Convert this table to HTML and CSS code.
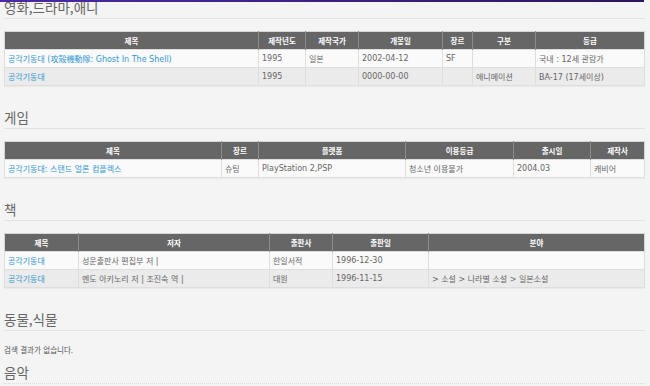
FILE: index.html
```html
<!DOCTYPE html>
<html lang="ko">
<head>
<meta charset="utf-8">
<title>검색 결과</title>
<link rel="stylesheet" href="styles.css">
</head>
<body>
<div class="topbar"></div>
<main class="page">
  <section class="section">
    <h2 class="heading">영화,드라마,애니</h2>
    <table class="grid grid-movie">
      <thead>
        <tr><th>제목</th><th>제작년도</th><th>제작국가</th><th>개봉일</th><th>장르</th><th>구분</th><th>등급</th></tr>
      </thead>
      <tbody>
        <tr><td><a class="link" href="#">공각기동대 (攻殼機動隊: Ghost In The Shell)</a></td><td>1995</td><td>일본</td><td>2002-04-12</td><td>SF</td><td></td><td>국내 : 12세 관람가</td></tr>
        <tr class="alt"><td><a class="link" href="#">공각기동대</a></td><td>1995</td><td></td><td>0000-00-00</td><td></td><td>애니메이션</td><td>BA-17 (17세이상)</td></tr>
      </tbody>
    </table>
  </section>

  <section class="section">
    <h2 class="heading">게임</h2>
    <table class="grid grid-game">
      <thead>
        <tr><th>제목</th><th>장르</th><th>플랫폼</th><th>이용등급</th><th>출시일</th><th>제작사</th></tr>
      </thead>
      <tbody>
        <tr><td><a class="link" href="#">공각기동대: 스탠드 얼론 컴플렉스</a></td><td>슈팅</td><td>PlayStation 2,PSP</td><td>청소년 이용불가</td><td>2004.03</td><td>캐비어</td></tr>
      </tbody>
    </table>
  </section>

  <section class="section">
    <h2 class="heading">책</h2>
    <table class="grid grid-book">
      <thead>
        <tr><th>제목</th><th>저자</th><th>출판사</th><th>출판일</th><th>분야</th></tr>
      </thead>
      <tbody>
        <tr><td><a class="link" href="#">공각기동대</a></td><td>성운출판사 편집부 저 |</td><td>한일서적</td><td>1996-12-30</td><td></td></tr>
        <tr class="alt"><td><a class="link" href="#">공각기동대</a></td><td>멘도 아키노리 저 | 조진숙 역 |</td><td>대원</td><td>1996-11-15</td><td>&gt; 소설 &gt; 나라별 소설 &gt; 일본소설</td></tr>
      </tbody>
    </table>
  </section>

  <section class="section">
    <h2 class="heading">동물,식물</h2>
    <p class="empty">검색 결과가 없습니다.</p>
  </section>

  <section class="section section-after-empty">
    <h2 class="heading heading-dotted">음악</h2>
  </section>
</main>
</body>
</html>
```

FILE: styles.css
```css
html, body {
  margin: 0;
  padding: 0;
  background: #f4f4f4;
}

body {
  font-family: "DejaVu Sans", "Noto Sans CJK KR", sans-serif;
  color: #666;
  overflow: hidden;
}

.topbar {
  position: fixed;
  top: 0;
  left: 0;
  width: 644px;
  height: 2px;
  background: linear-gradient(90deg, #4b2aa3, #2a1660);
  z-index: 5;
}

.page {
  width: 641px;
  padding: 0 5px 0 4px;
}

.section {
  margin-top: 22px;
}

.section:first-child {
  margin-top: -2px;
}

.section-after-empty {
  margin-top: 6px;
}

.heading {
  margin: 0;
  font-family: "Noto Sans CJK KR", sans-serif;
  font-weight: 400;
  font-size: 13.5px;
  line-height: 18px;
  color: #666;
  padding-bottom: 2px;
  border-bottom: 1px solid #e2e2e2;
}

.heading-dotted {
  border-bottom: 1px dotted #d8d8d8;
}

.grid {
  margin-top: 12px;
  width: 641px;
  table-layout: fixed;
  border-collapse: collapse;
  border: 1px solid #d6d6d6;
  font-size: 8px;
  box-shadow: 0 1px 1px rgba(0,0,0,0.04);
}

.grid th {
  height: 17px;
  padding: 0 3px;
  background: #666;
  color: #fff;
  font-weight: bold;
  font-size: 7.5px;
  text-align: center;
  border-left: 1px solid #8c8c8c;
  white-space: nowrap;
}

.grid th:first-child {
  border-left: 0;
}

.grid td {
  height: 17px;
  padding: 0 3px;
  border: 1px solid #dedede;
  background: #fafafa;
  color: #666;
  white-space: nowrap;
  overflow: hidden;
}

.grid .alt td {
  background: #ebebeb;
}

.link {
  color: #3198d4;
  text-decoration: none;
}

/* movie table columns */
.grid-movie th:nth-child(1) { width: 247px; }
.grid-movie th:nth-child(2) { width: 40px; }
.grid-movie th:nth-child(3) { width: 46px; }
.grid-movie th:nth-child(4) { width: 77px; }
.grid-movie th:nth-child(5) { width: 23px; }
.grid-movie th:nth-child(6) { width: 56px; }

/* game table columns */
.grid-game th:nth-child(1) { width: 210px; }
.grid-game th:nth-child(2) { width: 30px; }
.grid-game th:nth-child(3) { width: 140px; }
.grid-game th:nth-child(4) { width: 101px; }
.grid-game th:nth-child(5) { width: 70px; }

/* book table columns */
.grid-book th:nth-child(1) { width: 67px; }
.grid-book th:nth-child(2) { width: 184px; }
.grid-book th:nth-child(3) { width: 56px; }
.grid-book th:nth-child(4) { width: 89px; }

.empty {
  margin: 14px 0 0;
  font-size: 7.5px;
  line-height: 12px;
  color: #555;
}
```
